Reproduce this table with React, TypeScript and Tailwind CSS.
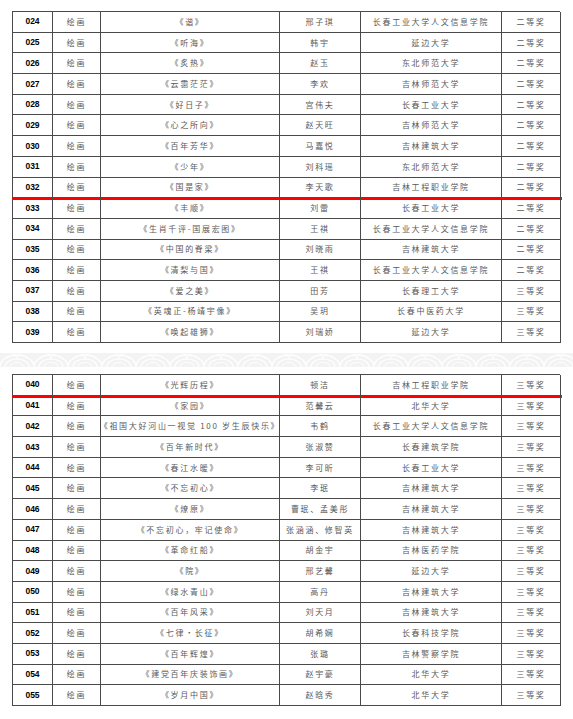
type Row = {
  no: string;
  title: string;
  name: string;
  school: string;
  prize: string;
  mark?: boolean;
};

const first: Row[] = [
  { no: "024", title: "《谐》", name: "邢子琪", school: "长春工业大学人文信息学院", prize: "二等奖" },
  { no: "025", title: "《听海》", name: "韩宇", school: "延边大学", prize: "二等奖" },
  { no: "026", title: "《炙热》", name: "赵玉", school: "东北师范大学", prize: "二等奖" },
  { no: "027", title: "《云霭茫茫》", name: "李欢", school: "吉林师范大学", prize: "二等奖" },
  { no: "028", title: "《好日子》", name: "宫伟夫", school: "长春工业大学", prize: "二等奖" },
  { no: "029", title: "《心之所向》", name: "赵天旺", school: "吉林师范大学", prize: "二等奖" },
  { no: "030", title: "《百年芳华》", name: "马嘉悦", school: "吉林建筑大学", prize: "二等奖" },
  { no: "031", title: "《少年》", name: "刘科瑶", school: "东北师范大学", prize: "二等奖" },
  { no: "032", title: "《国是家》", name: "李天歌", school: "吉林工程职业学院", prize: "二等奖", mark: true },
  { no: "033", title: "《丰顺》", name: "刘雷", school: "长春工业大学", prize: "二等奖" },
  { no: "034", title: "《生肖千评-国展宏图》", name: "王祺", school: "长春工业大学人文信息学院", prize: "二等奖" },
  { no: "035", title: "《中国的脊梁》", name: "刘晓雨", school: "吉林建筑大学", prize: "二等奖" },
  { no: "036", title: "《清梨与国》", name: "王祺", school: "长春工业大学人文信息学院", prize: "二等奖" },
  { no: "037", title: "《爱之美》", name: "田芳", school: "长春理工大学", prize: "三等奖" },
  { no: "038", title: "《英魂正-杨靖宇像》", name: "吴玥", school: "长春中医药大学", prize: "三等奖" },
  { no: "039", title: "《唤起雄狮》", name: "刘瑞娇", school: "延边大学", prize: "三等奖" },
];

const second: Row[] = [
  { no: "040", title: "《光辉历程》", name: "顿洁", school: "吉林工程职业学院", prize: "三等奖", mark: true },
  { no: "041", title: "《家园》", name: "范馨云", school: "北华大学", prize: "三等奖" },
  { no: "042", title: "《祖国大好河山一视觉 100 岁生辰快乐》", name: "韦鹤", school: "长春工业大学人文信息学院", prize: "三等奖" },
  { no: "043", title: "《百年新时代》", name: "张淑赞", school: "长春建筑学院", prize: "三等奖" },
  { no: "044", title: "《春江水暖》", name: "李可昕", school: "长春工业大学", prize: "三等奖" },
  { no: "045", title: "《不忘初心》", name: "李珉", school: "吉林建筑大学", prize: "三等奖" },
  { no: "046", title: "《燎原》", name: "曹珉、孟美彤", school: "吉林建筑大学", prize: "三等奖" },
  { no: "047", title: "《不忘初心，牢记使命》", name: "张涵涵、修智英", school: "吉林建筑大学", prize: "三等奖" },
  { no: "048", title: "《革命红船》", name: "胡金宇", school: "吉林医药学院", prize: "三等奖" },
  { no: "049", title: "《院》", name: "邢艺馨", school: "延边大学", prize: "三等奖" },
  { no: "050", title: "《绿水青山》", name: "高丹", school: "吉林建筑大学", prize: "三等奖" },
  { no: "051", title: "《百年风采》", name: "刘天月", school: "吉林建筑大学", prize: "三等奖" },
  { no: "052", title: "《七律·长征》", name: "胡希娴", school: "长春科技学院", prize: "三等奖" },
  { no: "053", title: "《百年辉煌》", name: "张璐", school: "吉林警察学院", prize: "三等奖" },
  { no: "054", title: "《建党百年庆装饰画》", name: "赵宇豪", school: "北华大学", prize: "三等奖" },
  { no: "055", title: "《岁月中国》", name: "赵晗秀", school: "北华大学", prize: "三等奖" },
];

const cell = "flex items-center justify-center border-r border-b border-[#4a4a4a] whitespace-nowrap overflow-hidden";
const cjk = "text-[8px] tracking-[1.7px] text-[#5a5a5a] [font-family:'Noto_Sans_CJK_SC',sans-serif]";

const AwardTable = ({ rows }: { rows: Row[] }) => {
  return (
    <div className="w-[548px] border-l border-t border-[#4a4a4a]">
      {rows.map((r) => (
        <div key={r.no} className="relative grid h-[20.7px] grid-cols-[40px_48px_179px_81px_141px_59px]">
          <div className={`${cell} text-[8.5px] font-bold text-black [font-family:'Liberation_Sans',Arial,sans-serif]`}>
            {r.no}
          </div>
          <div className={`${cell} ${cjk}`}>绘画</div>
          <div className={`${cell} ${cjk}`}>{r.title}</div>
          <div className={`${cell} ${cjk}`}>{r.name}</div>
          <div className={`${cell} ${cjk}`}>{r.school}</div>
          <div className={`${cell} ${cjk}`}>{r.prize}</div>
          {/* 红色标注线 */}
          {r.mark && <div className="absolute -bottom-[2px] -left-[1px] -right-[2px] h-[3px] bg-[#ff0000]" />}
        </div>
      ))}
    </div>
  );
};

// 分页处的云纹装饰
const WaveBand = () => {
  return (
    <svg className="block h-[14px] w-full" viewBox="0 0 573 14" preserveAspectRatio="none">
      <defs>
        <pattern id="wave" width="34" height="14" patternUnits="userSpaceOnUse">
          <rect width="34" height="14" fill="#f3f3f3" />
          <path d="M0 14a17 12 0 0 1 34 0" fill="none" stroke="#ffffff" strokeWidth="1.4" />
          <path d="M5 14a12 8 0 0 1 24 0" fill="none" stroke="#ffffff" strokeWidth="1.2" />
          <path d="M10 14a7 4.5 0 0 1 14 0" fill="none" stroke="#ffffff" strokeWidth="1" />
          <path d="M-17 7a17 12 0 0 1 34 0M17 7a17 12 0 0 1 34 0" fill="none" stroke="#ffffff" strokeWidth="1" opacity="0.7" />
        </pattern>
      </defs>
      <rect width="573" height="14" fill="url(#wave)" />
    </svg>
  );
};

export default function App() {
  return (
    <div className="h-[719px] w-[573px] overflow-hidden bg-white pt-[11px]">
      <div className="pl-[12px]">
        <AwardTable rows={first} />
      </div>
      <div className="mt-[10px]">
        <WaveBand />
      </div>
      <div className="mt-[7px] pl-[12px]">
        <AwardTable rows={second} />
      </div>
    </div>
  );
}
